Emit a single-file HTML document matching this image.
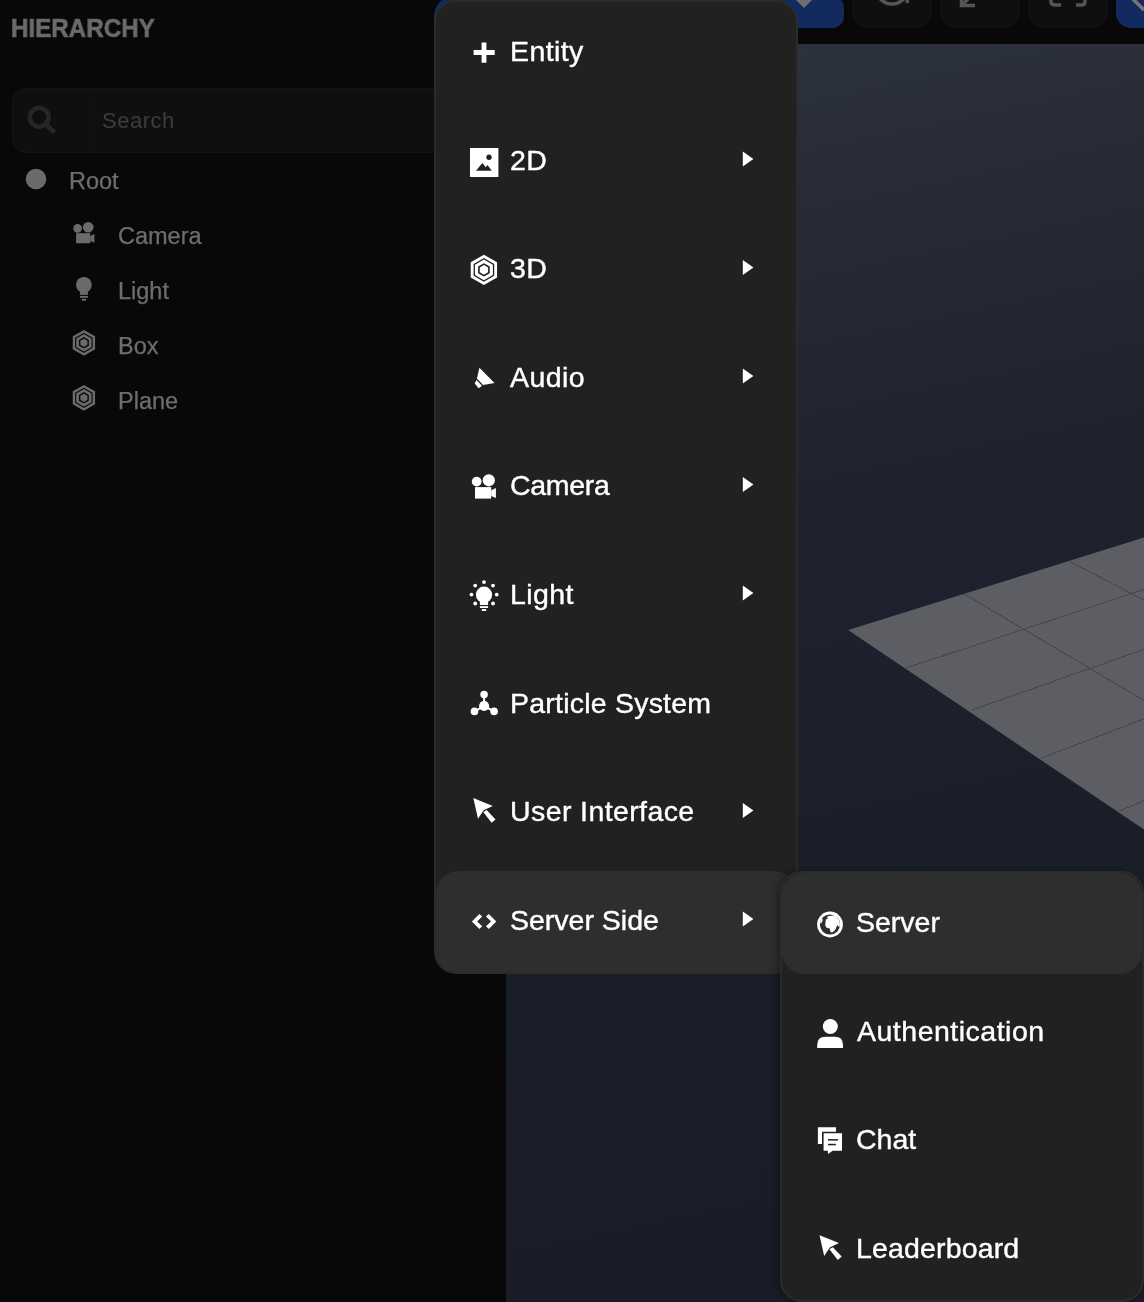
<!DOCTYPE html>
<html><head><meta charset="utf-8">
<style>
*{box-sizing:border-box;margin:0;padding:0}
html,body{width:1144px;height:1302px;overflow:hidden;background:#080808;font-family:"Liberation Sans",sans-serif}
.abs{position:absolute}
.txt{position:absolute;white-space:nowrap;line-height:1}
#viewport{left:506px;top:44px;width:638px;height:1258px;background:linear-gradient(168deg,#2f3441 0%,#272c38 14%,#1f2330 36%,#1b1f2a 60%,#191c26 100%)}
.tbtn{position:absolute;top:-20px;height:48px;width:80px;border-radius:15px;background:#0f0f0f}
.menu{position:absolute;background:#212121;border:2px solid #2b2b2b;border-radius:22px;overflow:hidden}
.hl{position:absolute;background:#2e2e2e;border-radius:22px}
.mt{position:absolute;white-space:nowrap;line-height:1;font-size:28.5px;color:#fff;letter-spacing:0.4px;-webkit-text-stroke:0.4px #fff}
.tt{position:absolute;white-space:nowrap;line-height:1;font-size:23.5px;color:#6e6e6e;-webkit-text-stroke:0.25px #6e6e6e}
svg{position:absolute;left:0;top:0}
.txt,.mt,.tt{will-change:transform}
</style></head>
<body>
<div id="viewport" class="abs"></div>
<svg width="1144" height="1302" viewBox="0 0 1144 1302"><polygon points="848.1,629.9 1144,537.6 1144,829.5" fill="#5d5e63"/><line x1="963.9" y1="593.8" x2="1144" y2="700.5" stroke="#46474c" stroke-width="1" shape-rendering="crispEdges"/><line x1="1069.7" y1="561.6" x2="1144" y2="600" stroke="#46474c" stroke-width="1" shape-rendering="crispEdges"/><line x1="906.7" y1="667.8" x2="1144" y2="589.5" stroke="#46474c" stroke-width="1" shape-rendering="crispEdges"/><line x1="970.8" y1="710.5" x2="1144" y2="649.4" stroke="#46474c" stroke-width="1" shape-rendering="crispEdges"/><line x1="1041.4" y1="758" x2="1144" y2="718.9" stroke="#46474c" stroke-width="1" shape-rendering="crispEdges"/><line x1="1118.7" y1="811.2" x2="1144" y2="800.7" stroke="#46474c" stroke-width="1" shape-rendering="crispEdges"/></svg>

<!-- top buttons -->
<div class="abs" style="left:434px;top:-4px;width:410px;height:32px;border-radius:26px 15px 15px 15px;background:#132a5e"></div>
<div class="tbtn" style="left:852px"></div>
<div class="tbtn" style="left:940px"></div>
<div class="tbtn" style="left:1028px"></div>
<div class="tbtn" style="left:1116px;width:90px;background:#132a5e"></div>
<svg width="1144" height="1302" viewBox="0 0 1144 1302"><path fill="#6e6e6e" d="M796,0 L812,0 L804,8 Z"/>
<circle cx="892" cy="-12" r="16" fill="none" stroke="#555" stroke-width="3.6"/>
<rect x="905.5" y="0" width="3.5" height="3" fill="#555"/>
<path d="M961.5,-3 V5.5 H975" fill="none" stroke="#555" stroke-width="3.6"/><path d="M962,5 L972,-5" stroke="#555" stroke-width="3.6"/>
<path d="M1051,-3 V1.5 Q1051,5 1054.5,5 H1061" fill="none" stroke="#555" stroke-width="3.4"/><path d="M1076,5 H1081.5 Q1085,5 1085,1.5 V-3" fill="none" stroke="#555" stroke-width="3.4"/>
<path d="M1133,-1 L1144,10" stroke="#777" stroke-width="3.5"/></svg>

<!-- left panel -->
<div class="txt" style="left:11px;top:15px;font-weight:bold;font-size:26px;color:#6b6b6b;-webkit-text-stroke:0.6px #6b6b6b;transform:scaleX(0.93);transform-origin:0 0">HIERARCHY</div>
<div class="abs" style="left:12px;top:88px;width:470px;height:65px;background:#0f0f0f;border:1px solid #141414;border-radius:14px"></div>
<div class="abs" style="left:89px;top:89px;width:1px;height:63px;background:#101010"></div>
<div class="txt" style="left:101.5px;top:110.3px;font-size:22px;color:#3d3d3d;letter-spacing:0.5px">Search</div>
<div class="tt" style="left:69px;top:169.9px">Root</div>
<div class="tt" style="left:118px;top:225.1px">Camera</div>
<div class="tt" style="left:118px;top:280.1px">Light</div>
<div class="tt" style="left:118px;top:335.1px">Box</div>
<div class="tt" style="left:118px;top:390.1px">Plane</div>
<svg width="1144" height="1302" viewBox="0 0 1144 1302"><circle cx="36" cy="179" r="10.3" fill="#6b6b6b"/>
<g transform="translate(83.85,232.5) scale(0.875)" fill="#6b6b6b"><circle cx="-7.15" cy="-4.7" r="4.9"/><circle cx="4.95" cy="-6.0" r="6.1"/><rect x="-8.85" y="0.8" width="16.2" height="11.5"/><path d="M7.35,3.9 L12.05,1.7 L12.05,11.7 L7.35,9.6 Z"/></g>
<g transform="translate(83.9,284.9) scale(0.97)" fill="#6b6b6b"><circle cx="0" cy="0" r="8.1"/><rect x="-4.1" y="4" width="8.2" height="6.3"/><rect x="-4.1" y="11.4" width="8.2" height="1.9"/><rect x="-2.2" y="14.4" width="4.4" height="1.9"/></g>
<path fill="#6b6b6b" fill-rule="evenodd" d="M83.90,329.90 L95.07,336.35 L95.07,349.25 L83.90,355.70 L72.73,349.25 L72.73,336.35 Z M83.90,332.70 L92.65,337.75 L92.65,347.85 L83.90,352.90 L75.15,347.85 L75.15,337.75 Z M83.90,333.98 L91.54,338.39 L91.54,347.21 L83.90,351.62 L76.26,347.21 L76.26,338.39 Z M83.90,337.11 L88.83,339.96 L88.83,345.64 L83.90,348.49 L78.97,345.64 L78.97,339.96 Z M83.90,338.72 L87.43,340.76 L87.43,344.84 L83.90,346.88 L80.37,344.84 L80.37,340.76 Z"/>
<path fill="#6b6b6b" fill-rule="evenodd" d="M83.90,384.90 L95.07,391.35 L95.07,404.25 L83.90,410.70 L72.73,404.25 L72.73,391.35 Z M83.90,387.70 L92.65,392.75 L92.65,402.85 L83.90,407.90 L75.15,402.85 L75.15,392.75 Z M83.90,388.98 L91.54,393.39 L91.54,402.21 L83.90,406.62 L76.26,402.21 L76.26,393.39 Z M83.90,392.11 L88.83,394.96 L88.83,400.64 L83.90,403.49 L78.97,400.64 L78.97,394.96 Z M83.90,393.72 L87.43,395.76 L87.43,399.84 L83.90,401.88 L80.37,399.84 L80.37,395.76 Z"/>
<circle cx="39.2" cy="117.3" r="9.4" fill="none" stroke="#262626" stroke-width="4.6"/>
<line x1="46" y1="124.2" x2="54.5" y2="132.7" stroke="#262626" stroke-width="4.6"/></svg>

<!-- main menu -->
<div class="menu" style="left:434px;top:0px;width:364px;height:974px">
  <div class="hl" style="left:0;top:869px;width:360px;height:103px"></div>
</div>
<div class="mt" style="left:510px;top:37.1px">Entity</div>
<div class="mt" style="left:510px;top:145.7px">2D</div>
<div class="mt" style="left:510px;top:254.2px">3D</div>
<div class="mt" style="left:510px;top:362.8px">Audio</div>
<div class="mt" style="left:510px;top:471.3px;letter-spacing:-0.3px">Camera</div>
<div class="mt" style="left:510px;top:579.9px">Light</div>
<div class="mt" style="left:510px;top:688.5px;letter-spacing:0.22px">Particle System</div>
<div class="mt" style="left:510px;top:797px">User Interface</div>
<div class="mt" style="left:510px;top:905.6px;letter-spacing:0px">Server Side</div>

<!-- sub menu -->
<div class="menu" style="left:780px;top:871px;width:364px;height:431px;box-shadow:-3px 0 8px rgba(0,0,0,0.35)">
  <div class="hl" style="left:0;top:0;width:360px;height:101px"></div>
</div>
<div class="mt" style="left:856px;top:907.6px;letter-spacing:0px">Server</div>
<div class="mt" style="left:857px;top:1017.4px;letter-spacing:0.5px">Authentication</div>
<div class="mt" style="left:856px;top:1124.9px;letter-spacing:0px">Chat</div>
<div class="mt" style="left:856px;top:1234.4px;letter-spacing:0.15px">Leaderboard</div>

<svg width="1144" height="1302" viewBox="0 0 1144 1302"><path fill="#ffffff" d="M481.6,42.5 h4.8 v7.6 h8.3 v4.8 h-8.3 v7.8 h-4.8 v-7.8 h-8.0 v-4.8 h8.0 Z"/>
<path fill="#ffffff" fill-rule="evenodd" d="M470,148 h28.4 v29 h-28.4 Z M476,170.8 L482.4,163.1 L485.7,167.2 L487.5,165 L491.8,170.8 Z M489,154.5 a2.8,2.8 0 1,0 0.01,0 Z"/>
<path fill="#ffffff" fill-rule="evenodd" d="M483.90,254.70 L497.06,262.30 L497.06,277.50 L483.90,285.10 L470.74,277.50 L470.74,262.30 Z M483.90,258.00 L494.21,263.95 L494.21,275.85 L483.90,281.80 L473.59,275.85 L473.59,263.95 Z M483.90,259.50 L492.90,264.70 L492.90,275.10 L483.90,280.30 L474.90,275.10 L474.90,264.70 Z M483.90,263.20 L489.71,266.55 L489.71,273.25 L483.90,276.60 L478.09,273.25 L478.09,266.55 Z M483.90,265.10 L488.06,267.50 L488.06,272.30 L483.90,274.70 L479.74,272.30 L479.74,267.50 Z"/>
<path fill="#ffffff" d="M479.4,367.8 L494.5,383 Q489,384.2 483.1,385.1 L476.9,378.6 Z"/>
<path fill="#ffffff" d="M476.5,380 L482,385.7 L478.6,388.2 L474.7,383.5 Z"/>
<g transform="translate(483.85,486.3) scale(1.0)" fill="#ffffff"><circle cx="-7.15" cy="-4.7" r="4.9"/><circle cx="4.95" cy="-6.0" r="6.1"/><rect x="-8.85" y="0.8" width="16.2" height="11.5"/><path d="M7.35,3.9 L12.05,1.7 L12.05,11.7 L7.35,9.6 Z"/></g>
<g transform="translate(484,594.7) scale(1.0)" fill="#ffffff"><circle cx="0" cy="0" r="8.1"/><rect x="-4.1" y="4" width="8.2" height="6.3"/><rect x="-4.1" y="11.4" width="8.2" height="1.9"/><rect x="-2.2" y="14.4" width="4.4" height="1.9"/><circle cx="0" cy="-12.6" r="1.9"/><circle cx="-8.8" cy="-9.1" r="1.9"/><circle cx="9" cy="-9.1" r="1.9"/><circle cx="-12.5" cy="-0.1" r="1.9"/><circle cx="12.7" cy="-0.1" r="1.9"/><circle cx="-8.8" cy="8.8" r="1.9"/><circle cx="9" cy="8.8" r="1.9"/></g>
<g fill="#ffffff" stroke="#ffffff" stroke-width="2"><line x1="484.1" y1="694.5" x2="484.1" y2="706" /><line x1="474.5" y1="711.4" x2="484.1" y2="706"/><line x1="494.1" y1="711.4" x2="484.1" y2="706"/></g>
<g fill="#ffffff"><circle cx="484.1" cy="694.5" r="3.8"/><circle cx="484.1" cy="706" r="5.1"/><circle cx="474.5" cy="711.4" r="3.8"/><circle cx="494.1" cy="711.4" r="3.8"/></g>
<g transform="translate(473.3,798) scale(1.0)" fill="#ffffff"><path d="M0,0 L19.5,7.9 L10.3,12.3 L4.7,20.8 Z"/><path d="M9.9,14 L13.4,12.1 L22.2,21.4 L18.3,24.7 Z"/></g>
<path fill="#ffffff" d="M479.4,913.9 L482.2,916.6 L477.1,921.4 L482.2,926.3 L479.4,928.9 L471.9,921.4 Z M488.8,913.9 L486,916.6 L491.1,921.4 L486,926.3 L488.8,928.9 L496.3,921.4 Z"/>
<path fill="#ffffff" d="M742.8,151.4 L753.4,159 L742.8,166.6 Z"/>
<path fill="#ffffff" d="M742.8,259.9 L753.4,267.5 L742.8,275.1 Z"/>
<path fill="#ffffff" d="M742.8,368.4 L753.4,376 L742.8,383.6 Z"/>
<path fill="#ffffff" d="M742.8,476.9 L753.4,484.5 L742.8,492.1 Z"/>
<path fill="#ffffff" d="M742.8,585.4 L753.4,593 L742.8,600.6 Z"/>
<path fill="#ffffff" d="M742.8,802.9 L753.4,810.5 L742.8,818.1 Z"/>
<path fill="#ffffff" d="M742.8,911.4 L753.4,919 L742.8,926.6 Z"/>
<circle cx="830" cy="924.5" r="11.5" fill="none" stroke="#ffffff" stroke-width="2.8"/>
<path fill="#ffffff" d="M834.7,915.3 L828,916.2 L826.8,917.2 L828.2,918.2 L825.8,919.5 L825.2,924.9 L826.2,927.4 L829.6,928.6 L830.6,932.1 L832.1,932.4 L834.7,930.5 L835.9,928.6 L837.2,924.9 L839.4,927.4 A10.1,10.1 0 0 0 834.7,915.3 Z"/>
<path fill="#ffffff" d="M820.5,919 L822.3,918.3 L822.6,920.5 L821.2,923.5 L820.1,923 Z"/>
<circle cx="830.3" cy="1026.5" r="7.5" fill="#ffffff"/>
<path fill="#ffffff" d="M817.2,1048 L817.2,1045 Q817.2,1036.8 825.5,1036.8 L835,1036.8 Q843,1036.8 843,1045 L843,1048 Z"/>
<path fill="#ffffff" d="M817.9,1127.2 H836 V1131.8 H822 V1144 H817.9 Z"/>
<path fill="#ffffff" d="M823.6,1133.3 H842 V1150.8 H832.7 L828,1153.9 L827.8,1150.8 H823.6 Z"/>
<rect x="828" y="1139.1" width="10.1" height="1.5" fill="#222"/><rect x="828" y="1143.8" width="7.9" height="1.5" fill="#222"/>
<g transform="translate(819.5,1235.2) scale(1.0)" fill="#ffffff"><path d="M0,0 L19.5,7.9 L10.3,12.3 L4.7,20.8 Z"/><path d="M9.9,14 L13.4,12.1 L22.2,21.4 L18.3,24.7 Z"/></g></svg>
</body></html>
